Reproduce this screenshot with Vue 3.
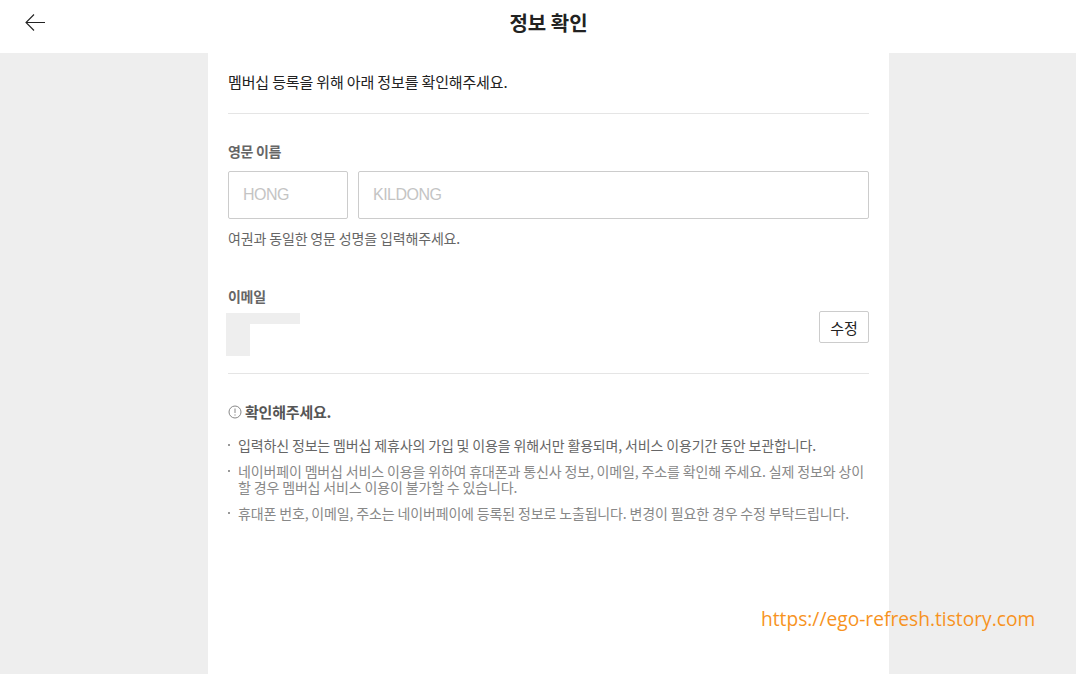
<script setup>
const notes = [
  { text: '입력하신 정보는 멤버십 제휴사의 가입 및 이용을 위해서만 활용되며, 서비스 이용기간 동안 보관합니다.', dark: true },
  { text: '네이버페이 멤버십 서비스 이용을 위하여 휴대폰과 통신사 정보, 이메일, 주소를 확인해 주세요. 실제 정보와 상이할 경우 멤버십 서비스 이용이 불가할 수 있습니다.', dark: false },
  { text: '휴대폰 번호, 이메일, 주소는 네이버페이에 등록된 정보로 노출됩니다. 변경이 필요한 경우 수정 부탁드립니다.', dark: false }
]
</script>

<template>
  <div class="page">
    <header class="top">
      <button class="back" aria-label="뒤로">
        <svg width="20" height="18" viewBox="0 0 20 18" fill="none" stroke="#222" stroke-width="1.1">
          <path d="M9 .5 1 8.5l8 8M1 8.5h19" />
        </svg>
      </button>
      <h1 class="title">정보 확인</h1>
    </header>

    <main class="sheet">
      <p class="lead">멤버십 등록을 위해 아래 정보를 확인해주세요.</p>

      <section class="name">
        <h2 class="label">영문 이름</h2>
        <div class="inputs">
          <input class="field first" placeholder="HONG" />
          <input class="field last" placeholder="KILDONG" />
        </div>
        <p class="hint">여권과 동일한 영문 성명을 입력해주세요.</p>
      </section>

      <section class="email">
        <h2 class="label">이메일</h2>
        <div class="email-row">
          <div class="mask">
            <span class="mask-top"></span>
            <span class="mask-left"></span>
          </div>
          <button class="edit">수정</button>
        </div>
      </section>

      <section class="notice">
        <h3 class="notice-title">
          <svg width="14" height="14" viewBox="0 0 14 14" fill="none" stroke="#888">
            <circle cx="7" cy="7" r="6" />
            <path d="M7 3.5v4.5M7 9.4v1.2" />
          </svg>
          확인해주세요.
        </h3>
        <ul class="list">
          <li v-for="n in notes" :key="n.text" :class="{ dark: n.dark }">{{ n.text }}</li>
        </ul>
      </section>
    </main>

    <div class="mark">https://ego-refresh.tistory.com</div>
  </div>
</template>

<style>
html, body { margin: 0; background: #eee; }
</style>

<style scoped>
.page {
  position: relative;
  height: 674px;
  overflow: hidden;
  background: #eee;
  font-family: "Noto Sans CJK KR", "Noto Sans", sans-serif;
  color: #222;
}
.top {
  height: 53px;
  padding-left: 21px;
  box-sizing: border-box;
  background: #fff;
  display: flex;
  align-items: center;
  justify-content: center;
  position: relative;
}
.back {
  position: absolute;
  left: 25px;
  top: 14px;
  padding: 0;
  border: 0;
  background: none;
  line-height: 0;
}
.title {
  margin: 0 0 7px;
  font-size: 20px;
  font-weight: 700;
  line-height: 28px;
}
.sheet {
  box-sizing: border-box;
  width: 681px;
  height: 621px;
  margin-left: 208px;
  padding: 0 20px;
  background: #fff;
}
.lead {
  margin: 0;
  padding: 18px 0 20px;
  height: 22px;
  line-height: 22px;
  font-size: 15px;
  letter-spacing: -0.15px;
  border-bottom: 1px solid #e5e5e5;
}
.name { padding-top: 27px; }
.label {
  margin: 0;
  font-size: 14px;
  line-height: 20px;
  font-weight: 700;
  color: #666;
  letter-spacing: -0.3px;
}
.inputs {
  display: flex;
  gap: 10px;
  margin-top: 10px;
}
.field {
  box-sizing: border-box;
  height: 48px;
  padding: 0 14px;
  border: 1px solid #ccc;
  border-radius: 2px;
  font-family: "Liberation Sans", sans-serif;
  font-size: 16px;
  letter-spacing: -0.5px;
  outline: none;
}
.field::placeholder { color: #c4c4c4; opacity: 1; }
.first { width: 120px; }
.last { flex: 1; min-width: 0; }
.hint {
  margin: 10px 0 0;
  font-size: 14px;
  line-height: 18px;
  color: #666;
  letter-spacing: -0.15px;
}
.email { padding-top: 39px; }
.email-row {
  display: flex;
  justify-content: space-between;
  align-items: flex-start;
  height: 66px;
  border-bottom: 1px solid #e5e5e5;
  margin-top: 1px;
}
.mask {
  position: relative;
  width: 74px;
  height: 43px;
  margin: 6px 0 0 -2px;
}
.mask-top {
  position: absolute;
  left: 0;
  top: 0;
  width: 74px;
  height: 11px;
  background: #eee;
}
.mask-left {
  position: absolute;
  left: 0;
  top: 0;
  width: 24px;
  height: 43px;
  background: #eee;
}
.edit {
  box-sizing: border-box;
  width: 50px;
  height: 32px;
  margin-top: 4px;
  padding: 0;
  border: 1px solid #ccc;
  border-radius: 2px;
  background: #fff;
  font-family: inherit;
  font-size: 15px;
  color: #222;
}
.notice { padding-top: 28px; }
.notice-title {
  display: flex;
  align-items: center;
  gap: 3px;
  margin: 0;
  font-size: 15px;
  line-height: 20px;
  font-weight: 700;
  color: #555;
  letter-spacing: -0.2px;
}
.list {
  list-style: none;
  margin: 15px 0 0;
  padding: 0;
}
.list li {
  position: relative;
  padding-left: 10px;
  margin-bottom: 10px;
  font-size: 14px;
  line-height: 16px;
  color: #888;
  letter-spacing: -0.15px;
}
.list li.dark { color: #666; }
.list li::before {
  content: "";
  position: absolute;
  left: 0;
  top: 7px;
  width: 2px;
  height: 2px;
  background: #999;
}
.mark {
  position: absolute;
  left: 761px;
  top: 605px;
  font-family: "Open Sans", sans-serif;
  font-size: 19.2px;
  line-height: 28px;
  color: #f7931e;
}
</style>
